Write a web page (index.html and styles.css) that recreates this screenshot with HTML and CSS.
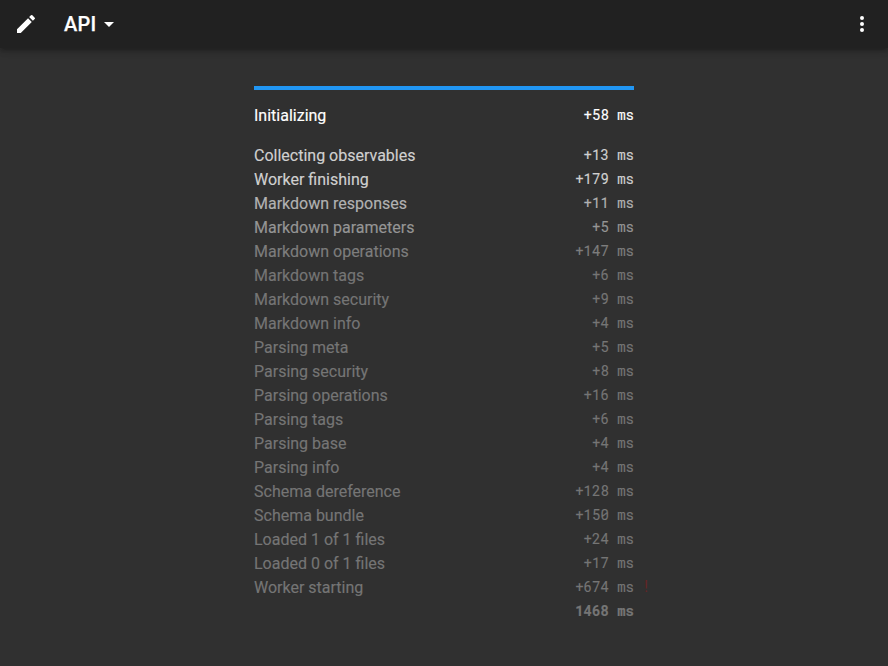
FILE: index.html
```html
<!DOCTYPE html>
<html lang="en">
<head>
<meta charset="utf-8">
<title>API</title>
<link rel="stylesheet" href="styles.css">
</head>
<body>
<header class="toolbar">
<svg class="icon" viewBox="0 0 24 24"><path d="M3 17.25V21h3.75L17.81 9.94l-3.75-3.75L3 17.25zM20.71 7.04a1 1 0 0 0 0-1.41l-2.34-2.34a1 1 0 0 0-1.41 0l-1.83 1.83 3.75 3.75 1.83-1.83z"/></svg>
<h1 class="title">API</h1>
<svg class="icon caret" viewBox="0 0 24 24"><path d="M7 10l5 5 5-5z"/></svg>
<svg class="icon more" viewBox="0 0 24 24"><path d="M12 8a2 2 0 1 0 0-4 2 2 0 0 0 0 4zm0 2a2 2 0 1 0 0 4 2 2 0 0 0 0-4zm0 6a2 2 0 1 0 0 4 2 2 0 0 0 0-4z"/></svg>
</header>
<main class="panel">
<div class="progress"></div>
<div class="row current"><span>Initializing</span><span class="time">+58 ms</span></div>
<div class="log">
<div class="row l1"><span>Collecting observables</span><span class="time">+13 ms</span></div>
<div class="row l2"><span>Worker finishing</span><span class="time">+179 ms</span></div>
<div class="row l3"><span>Markdown responses</span><span class="time">+11 ms</span></div>
<div class="row l4"><span>Markdown parameters</span><span class="time">+5 ms</span></div>
<div class="row l5"><span>Markdown operations</span><span class="time">+147 ms</span></div>
<div class="row"><span>Markdown tags</span><span class="time">+6 ms</span></div>
<div class="row"><span>Markdown security</span><span class="time">+9 ms</span></div>
<div class="row"><span>Markdown info</span><span class="time">+4 ms</span></div>
<div class="row"><span>Parsing meta</span><span class="time">+5 ms</span></div>
<div class="row"><span>Parsing security</span><span class="time">+8 ms</span></div>
<div class="row"><span>Parsing operations</span><span class="time">+16 ms</span></div>
<div class="row"><span>Parsing tags</span><span class="time">+6 ms</span></div>
<div class="row"><span>Parsing base</span><span class="time">+4 ms</span></div>
<div class="row"><span>Parsing info</span><span class="time">+4 ms</span></div>
<div class="row"><span>Schema dereference</span><span class="time">+128 ms</span></div>
<div class="row"><span>Schema bundle</span><span class="time">+150 ms</span></div>
<div class="row"><span>Loaded 1 of 1 files</span><span class="time">+24 ms</span></div>
<div class="row"><span>Loaded 0 of 1 files</span><span class="time">+17 ms</span></div>
<div class="row"><span>Worker starting</span><span class="time">+674 ms<span class="slow">!</span></span></div>
<div class="row total"><span class="time">1468 ms</span></div>
</div>
</main>
</body>
</html>
```
FILE: styles.css
```css
* { box-sizing: border-box; }
body { margin: 0; height: 666px; overflow: hidden; background: #303030; color: #fff; font: 16px/24px Roboto, sans-serif; }
.toolbar { display: flex; align-items: center; height: 48px; padding: 0 14px; background: #212121; box-shadow: 0 2px 4px -1px rgba(0,0,0,.2), 0 4px 5px rgba(0,0,0,.14), 0 1px 10px rgba(0,0,0,.12); }
.icon { width: 24px; height: 24px; fill: #fff; }
.title { margin: 0 0 0 26px; font-size: 20px; font-weight: 500; letter-spacing: .25px; -webkit-text-stroke: .25px #fff; }
.caret { margin-left: 1px; }
.more { margin-left: auto; }
.panel { width: 380px; margin: 38px auto 0; }
.progress { height: 4px; margin-bottom: 14px; background: #2196f3; }
.row { display: flex; justify-content: space-between; height: 24px; color: #757575; -webkit-text-stroke: .15px currentColor; }
.time { position: relative; font: 14px/22px "Roboto Mono", "DejaVu Sans Mono", monospace; white-space: pre; }
.slow { position: absolute; left: 100%; margin-left: 8px; font: 16px/22px Roboto, sans-serif; color: #632626; margin-left: 10px; -webkit-text-stroke: 0; }
.current { color: #fff; margin-bottom: 16px; }
.l1 { color: #d0d0d0; }
.l2 { color: #d0d0d0; }
.l3 { color: #b2b2b2; }
.l4 { color: #959595; }
.l5 { color: #7d7d7d; }
.total { justify-content: flex-end; }
.total .time { font-weight: 700; }
```
